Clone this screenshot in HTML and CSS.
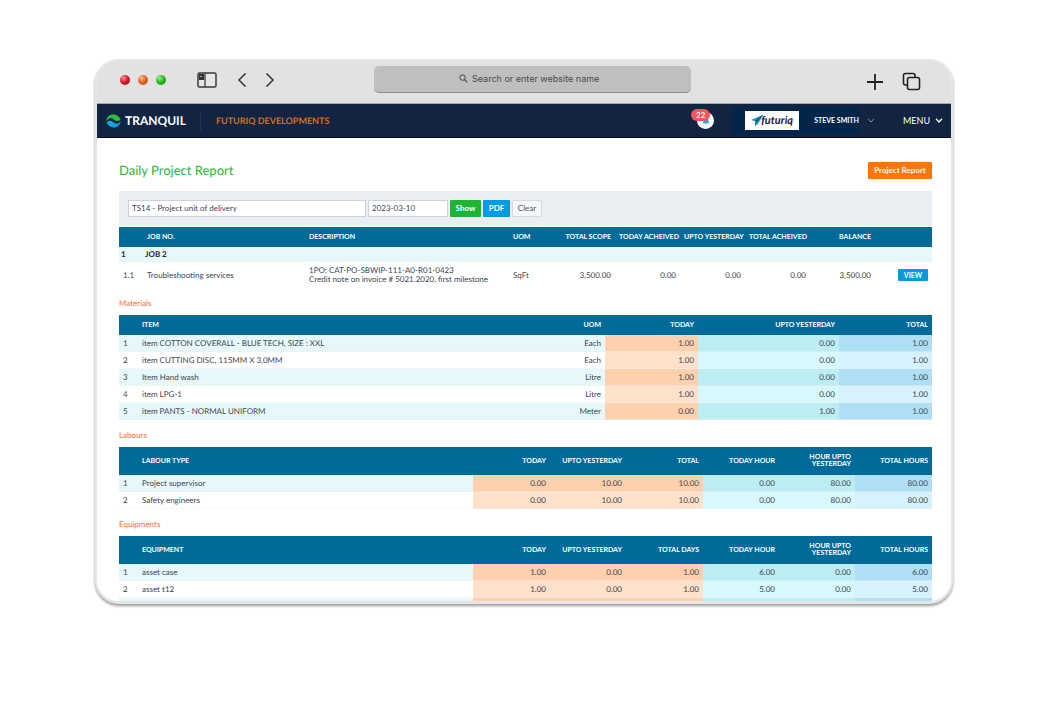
FILE: index.html
```html
<!DOCTYPE html>
<html lang="en">
<head>
<meta charset="utf-8">
<title>Daily Project Report</title>
<link rel="stylesheet" href="styles.css">
</head>
<body>
<div class="window">
  <div class="chrome">
    <div class="chrome-left">
      <div class="lights"><i class="light red"></i><i class="light orange"></i><i class="light green"></i></div>
      <button class="tool" aria-label="Sidebar"><svg width="20" height="16" viewBox="0 0 20 16"><rect x="1" y="1" width="18" height="14" rx="1.5" fill="#e6e6e6" stroke="#3a3a3a" stroke-width="1.5"/><path d="M8 1v14" stroke="#3a3a3a" stroke-width="1.3"/><path d="M2 2h5v6h-5z" fill="#333"/><path d="M3 4.500h2" stroke="#aaa"/></svg></button>
      <div class="arrows">
        <button class="tool" aria-label="Back"><svg width="10" height="16" viewBox="0 0 10 16"><path d="M8.500 1.500L2 8l6.500 6.500" fill="none" stroke="#333" stroke-width="1.5"/></svg></button>
        <button class="tool" aria-label="Forward"><svg width="10" height="16" viewBox="0 0 10 16"><path d="M1.500 1.500L8 8l-6.500 6.500" fill="none" stroke="#333" stroke-width="1.5"/></svg></button>
      </div>
    </div>
    <label class="address">
      <svg width="9" height="9" viewBox="0 0 9 9"><circle cx="3.600" cy="3.600" r="2.700" fill="none" stroke="#444"/><path d="M5.600 5.600L8.300 8.300" stroke="#444" stroke-width="1.200"/></svg>
      <input type="text" placeholder="Search or enter website name" aria-label="Address">
    </label>
    <div class="chrome-right">
      <button class="tool" aria-label="New tab"><svg width="18" height="18" viewBox="0 0 18 18"><path d="M9 1v16M1 9h16" stroke="#222" stroke-width="1.800"/></svg></button>
      <button class="tool" aria-label="Tabs"><svg width="19" height="19" viewBox="0 0 19 19"><path d="M5 13H3.500Q1.500 13 1.500 11V3.500Q1.500 1.500 3.500 1.500H11q2 0 2 2V5" fill="none" stroke="#222" stroke-width="1.600"/><rect x="5.500" y="5.500" width="12" height="12" rx="2" fill="none" stroke="#222" stroke-width="1.600"/></svg></button>
    </div>
  </div>

  <header class="nav">
    <a class="brand" href="#">
      <svg width="15" height="14" viewBox="0 0 15 14"><path d="M.3 7C.5 3 3.500.5 7.300.5c3.300 0 6.200 2 7.300 5.300-1.800 1.700-4.300 1.700-6.200.2C6.300 4.300 4.300 3.300 2.600 5 1.500 5.700.8 6.300.3 7z" fill="#2cc13a"/><path d="M14.800 7.200c-.6 3.700-3.500 6.300-7 6.300-3.300 0-6.100-2-7.200-5.200 1.800-2 4.300-2 6.500-.3 2.200 1.800 4.400 2.300 6 .8.700-.5 1.300-1 1.700-1.600z" fill="#17a3dc"/></svg>
      <span>TRANQUIL</span>
    </a>
    <span class="company">FUTURIQ DEVELOPMENTS</span>
    <button class="bell" aria-label="Notifications"><svg width="8" height="8" viewBox="0 0 8 8"><path d="M1 6q1-1 1-3a2 2 0 0 1 4 0q0 2 1 3zM3 7h2" fill="#1da1e6" stroke="#1da1e6" stroke-width=".5"/></svg><span class="count">22</span></button>
    <div class="account">
      <div class="client"><svg width="13" height="13" viewBox="0 0 13 13"><path d="M0 6L12.500.5 6.500 8z" fill="#1b8ed0"/><path d="M12.500.5L4 12.500 4.500 7z" fill="#14376b"/><path d="M12.500.5L6.500 11 5 9z" fill="#16b5a5"/></svg><span>futuriq</span></div>
      <button class="user">STEVE SMITH</button>
    </div>
    <svg class="chev dim" width="8" height="5" viewBox="0 0 8 5"><path d="M1 .8L4 4l3-3.200" fill="none" stroke="#8190a8"/></svg>
    <button class="menu">MENU <svg class="chev" width="8" height="5" viewBox="0 0 8 5"><path d="M1 .8L4 4l3-3.200" fill="none" stroke="#fff" stroke-width="1.300"/></svg></button>
  </header>

  <main class="page">
    <div class="title-row"><h1>Daily Project Report</h1><button class="btn report">Project Report</button></div>
    <form class="filter">
      <input class="field project" type="text" value="TS14 - Project unit of delivery" aria-label="Project">
      <input class="field date" type="text" value="2023-03-10" aria-label="Date">
      <button class="btn show" type="button">Show</button>
      <button class="btn pdf" type="button">PDF</button>
      <button class="btn clear" type="button">Clear</button>
    </form>

    <table class="jobs">
      <colgroup><col class="c-no"><col class="c-job"><col><col class="c-uom"><col class="c-num"><col class="c-num"><col class="c-num"><col class="c-num"><col class="c-num"><col class="c-act"></colgroup>
      <thead><tr><th></th><th>JOB NO.</th><th>DESCRIPTION</th><th>UOM</th><th class="r">TOTAL SCOPE</th><th class="r">TODAY ACHEIVED</th><th class="r">UPTO YESTERDAY</th><th class="r">TOTAL ACHEIVED</th><th class="r">BALANCE</th><th></th></tr></thead>
      <tbody>
        <tr class="group"><td>1</td><td colspan="9">JOB 2</td></tr>
        <tr class="job"><td>1.1</td><td>Troubleshooting services</td><td>1PO: CAT-PO-SBWIP-111-A0-R01-0423<br>Credit note on invoice # 5021.2020, first milestone</td><td>SqFt</td><td class="r">3,500.00</td><td class="r">0.00</td><td class="r">0.00</td><td class="r">0.00</td><td class="r">3,500.00</td><td class="r"><button class="btn view">VIEW</button></td></tr>
      </tbody>
    </table>

    <h2>Materials</h2>
    <table class="data">
      <colgroup><col class="d-no"><col><col class="d-uom"><col class="d-wide"><col class="d-widest"><col class="d-wide"></colgroup>
      <thead><tr><th></th><th>ITEM</th><th class="r">UOM</th><th class="r">TODAY</th><th class="r">UPTO YESTERDAY</th><th class="r">TOTAL</th></tr></thead>
      <tbody>
        <tr><td>1</td><td>item COTTON COVERALL - BLUE TECH, SIZE : XXL</td><td class="r">Each</td><td class="r peach">1.00</td><td class="r aqua">0.00</td><td class="r sky">1.00</td></tr>
        <tr><td>2</td><td>item CUTTING DISC, 115MM X 3,0MM</td><td class="r">Each</td><td class="r peach">1.00</td><td class="r aqua">0.00</td><td class="r sky">1.00</td></tr>
        <tr><td>3</td><td>Item Hand wash</td><td class="r">Litre</td><td class="r peach">1.00</td><td class="r aqua">0.00</td><td class="r sky">1.00</td></tr>
        <tr><td>4</td><td>item LPG-1</td><td class="r">Litre</td><td class="r peach">1.00</td><td class="r aqua">0.00</td><td class="r sky">1.00</td></tr>
        <tr><td>5</td><td>item PANTS - NORMAL UNIFORM</td><td class="r">Meter</td><td class="r peach">0.00</td><td class="r aqua">1.00</td><td class="r sky">1.00</td></tr>
      </tbody>
    </table>

    <h2>Labours</h2>
    <table class="data tall">
      <colgroup><col class="d-no"><col><col class="d-odd"><col class="d-even"><col class="d-odd"><col class="d-even"><col class="d-even"><col class="d-odd"></colgroup>
      <thead><tr><th></th><th>LABOUR TYPE</th><th class="r">TODAY</th><th class="r">UPTO YESTERDAY</th><th class="r">TOTAL</th><th class="r">TODAY HOUR</th><th class="r">HOUR UPTO YESTERDAY</th><th class="r">TOTAL HOURS</th></tr></thead>
      <tbody>
        <tr><td>1</td><td>Project supervisor</td><td class="r peach">0.00</td><td class="r peach">10.00</td><td class="r peach">10.00</td><td class="r aqua">0.00</td><td class="r aqua">80.00</td><td class="r sky">80.00</td></tr>
        <tr><td>2</td><td>Safety engineers</td><td class="r peach">0.00</td><td class="r peach">10.00</td><td class="r peach">10.00</td><td class="r aqua">0.00</td><td class="r aqua">80.00</td><td class="r sky">80.00</td></tr>
      </tbody>
    </table>

    <h2>Equipments</h2>
    <table class="data tall">
      <colgroup><col class="d-no"><col><col class="d-odd"><col class="d-even"><col class="d-odd"><col class="d-even"><col class="d-even"><col class="d-odd"></colgroup>
      <thead><tr><th></th><th>EQUIPMENT</th><th class="r">TODAY</th><th class="r">UPTO YESTERDAY</th><th class="r">TOTAL DAYS</th><th class="r">TODAY HOUR</th><th class="r">HOUR UPTO YESTERDAY</th><th class="r">TOTAL HOURS</th></tr></thead>
      <tbody>
        <tr><td>1</td><td>asset case</td><td class="r peach">1.00</td><td class="r peach">0.00</td><td class="r peach">1.00</td><td class="r aqua">6.00</td><td class="r aqua">0.00</td><td class="r sky">6.00</td></tr>
        <tr><td>2</td><td>asset t12</td><td class="r peach">1.00</td><td class="r peach">0.00</td><td class="r peach">1.00</td><td class="r aqua">5.00</td><td class="r aqua">0.00</td><td class="r sky">5.00</td></tr>
        <tr><td></td><td></td><td class="peach"></td><td class="peach"></td><td class="peach"></td><td class="aqua"></td><td class="aqua"></td><td class="sky"></td></tr>
      </tbody>
    </table>
  </main>
</div>
</body>
</html>
```
FILE: styles.css
```css
* { box-sizing: border-box; }
body {
  margin: 0;
  height: 100vh;
  padding: 59px 97px 101px 95px;
  background: #fff;
  font-family: Lato, "Liberation Sans", sans-serif;
  font-size: 8px;
  line-height: 9px;
  color: #3c4650;
  text-rendering: geometricPrecision;
}
button, input { font: inherit; color: inherit; margin: 0; }
button { border: 0; background: none; padding: 0; }
svg { display: block; flex: none; }

.window {
  height: 100%;
  overflow: hidden;
  border: 2px solid #e6e6e6;
  border-width: 1px 2px 3px;
  border-radius: 24px;
  background: #fff;
  box-shadow: 0 2px 3px rgba(0, 0, 0, .4);
}

/* Browser toolbar */
.chrome {
  display: flex;
  align-items: center;
  height: 44px;
  padding: 0 30px 0 23px;
  background: #e2e2e2;
  border-bottom: 1px solid #a9a9ab;
}
.chrome-left { display: flex; align-items: center; flex: 0 1 254px; gap: 31px; padding-bottom: 3px; }
.lights { display: flex; gap: 8px; }
.light { width: 10px; height: 10px; border-radius: 50%; }
.red { background: radial-gradient(circle at 35% 30%, #ff8d8d, #cf1622 50%, #a80d18); }
.orange { background: radial-gradient(circle at 35% 30%, #ffb98a, #dc6322 50%, #b94d12); }
.green { background: radial-gradient(circle at 35% 30%, #93f28c, #25b31d 50%, #128d0e); }
.arrows { display: flex; gap: 18px; margin-left: -11px; }
.address {
  display: flex;
  align-items: center;
  justify-content: center;
  gap: 4px;
  flex: 0 1 317px;
  height: 27px;
  margin-bottom: 5px;
  padding-right: 5px;
  padding-bottom: 1px;
  border-radius: 5px;
  background: #bfbfbf;
  border-bottom: 1px solid #8e8e8e;
}
.address input { width: 129px; border: 0; padding: 0; background: none; font-family: Inter, sans-serif; font-size: 9px; }
.address input::placeholder { color: #4a4a4a; opacity: 1; }
.chrome-right { display: flex; align-items: center; gap: 18px; margin-left: auto; }

/* Site header */
.nav {
  display: flex;
  align-items: center;
  height: 34px;
  padding-right: 8px;
  padding-left: 9px;
  background: #122441;
  border-bottom: 1px solid #04082a;
  color: #fff;
}
.brand {
  display: flex;
  align-items: center;
  gap: 4px;
  height: 19px;
  padding-right: 14px;
  border-right: 1px solid #22385a;
  color: #fff;
  font-size: 12px;
  font-weight: 700;
  line-height: 16px;
  text-decoration: none;
}
.company { margin-left: 15px; color: #dc6b18; font-size: 9px; font-weight: 700; }
.bell {
  position: relative;
  display: flex;
  align-items: center;
  justify-content: center;
  width: 17px;
  height: 17px;
  margin-left: auto;
  border-radius: 50%;
  background: #fff;
}
.count {
  position: absolute;
  top: -3px;
  left: -6px;
  width: 19px;
  height: 12px;
  border-radius: 6px;
  background: #f4565e;
  color: #fff;
  font-size: 8px;
  font-weight: 700;
  line-height: 12px;
}
.account {
  display: flex;
  align-items: center;
  gap: 15px;
  height: 27px;
  margin-left: 18px;
  padding-left: 13px;
  background: #02254a;
}
.client {
  display: flex;
  align-items: center;
  justify-content: center;
  width: 54px;
  height: 19px;
  background: #fff;
  color: #16223c;
  font-size: 11px;
  font-style: italic;
  font-weight: 700;
  line-height: 14px;
}
.client svg { margin-right: -3px; }
.user { font-size: 7px; font-weight: 700; }
.dim { margin: 0 28px 0 8px; }
.menu { display: flex; align-items: center; gap: 5px; font-size: 9px; }

/* Report */
.page { padding: 22px 19px 0 22px; }
.title-row { display: flex; align-items: center; justify-content: space-between; height: 20px; }
h1 { margin: 0; color: #2bb53c; font-size: 13px; font-weight: 400; line-height: 16px; }
h2 { margin: 0; padding-top: 3px; color: #f8702e; font-size: 8px; font-weight: 400; line-height: 24px; }
.btn { border-radius: 1px; color: #fff; font-weight: 700; white-space: nowrap; }
.report { height: 17px; width: 64px; background: #ff7506; }
.filter {
  display: flex;
  gap: 2px;
  height: 35px;
  margin: 11px 0 1px;
  padding: 9px;
  background: #e9eef2;
}
.field { border: 1px solid #cdd3da; padding: 0 3px 1px; height: 17px; background: #fff; }
.project { flex: 0 1 238px; min-width: 0; }
.date { flex: 0 1 80px; min-width: 0; }
.filter .btn { height: 17px; }
.show { width: 31px; background: #1fb533; }
.pdf { width: 27px; background: #069be0; }
.filter .clear { width: 30px; border: 1px solid #d7dade; background: #f6f7f8; color: #4c545c; font-weight: 400; }

table { width: 100%; table-layout: fixed; border-collapse: collapse; }
th, td { padding: 0 4px; text-align: left; }
th { height: 20px; background: #006b98; color: #fff; font-size: 7px; font-weight: 700; line-height: 7px; }
.r { text-align: right; }
.c-no { width: 24px; }
.c-job { width: 162px; }
.c-uom { width: 41px; }
.c-num { width: 65px; }
.c-act { width: 57px; }
.jobs th { white-space: nowrap; }
.group td { height: 15px; padding: 0 2px; background: #e6f8f9; color: #202b35; font-weight: 700; }
.job td { height: 26px; }
.view { display: block; width: 30px; height: 12px; margin-left: auto; background: #069be0; font-size: 7px; }

.d-no { width: 19px; }
.d-uom { width: 65px; }
.d-wide { width: 93px; }
.d-widest { width: 141px; }
.d-odd { width: 77px; }
.d-even { width: 76px; }
.tall th { height: 28px; }
.data td { height: 17px; box-shadow: inset 0 -1px rgba(235, 240, 242, .5); }
.data tbody tr:nth-child(odd) { background: #e6f8f9; }
.data .peach { background: #fee1cb; }
.data .aqua { background: #d7f8fd; }
.data .sky { background: #d7f1fd; }
.data tr:nth-child(odd) .peach { background: #ffd0ae; }
.data tr:nth-child(odd) .aqua { background: #bcedf3; }
.data tr:nth-child(odd) .sky { background: #afdff4; }
```
